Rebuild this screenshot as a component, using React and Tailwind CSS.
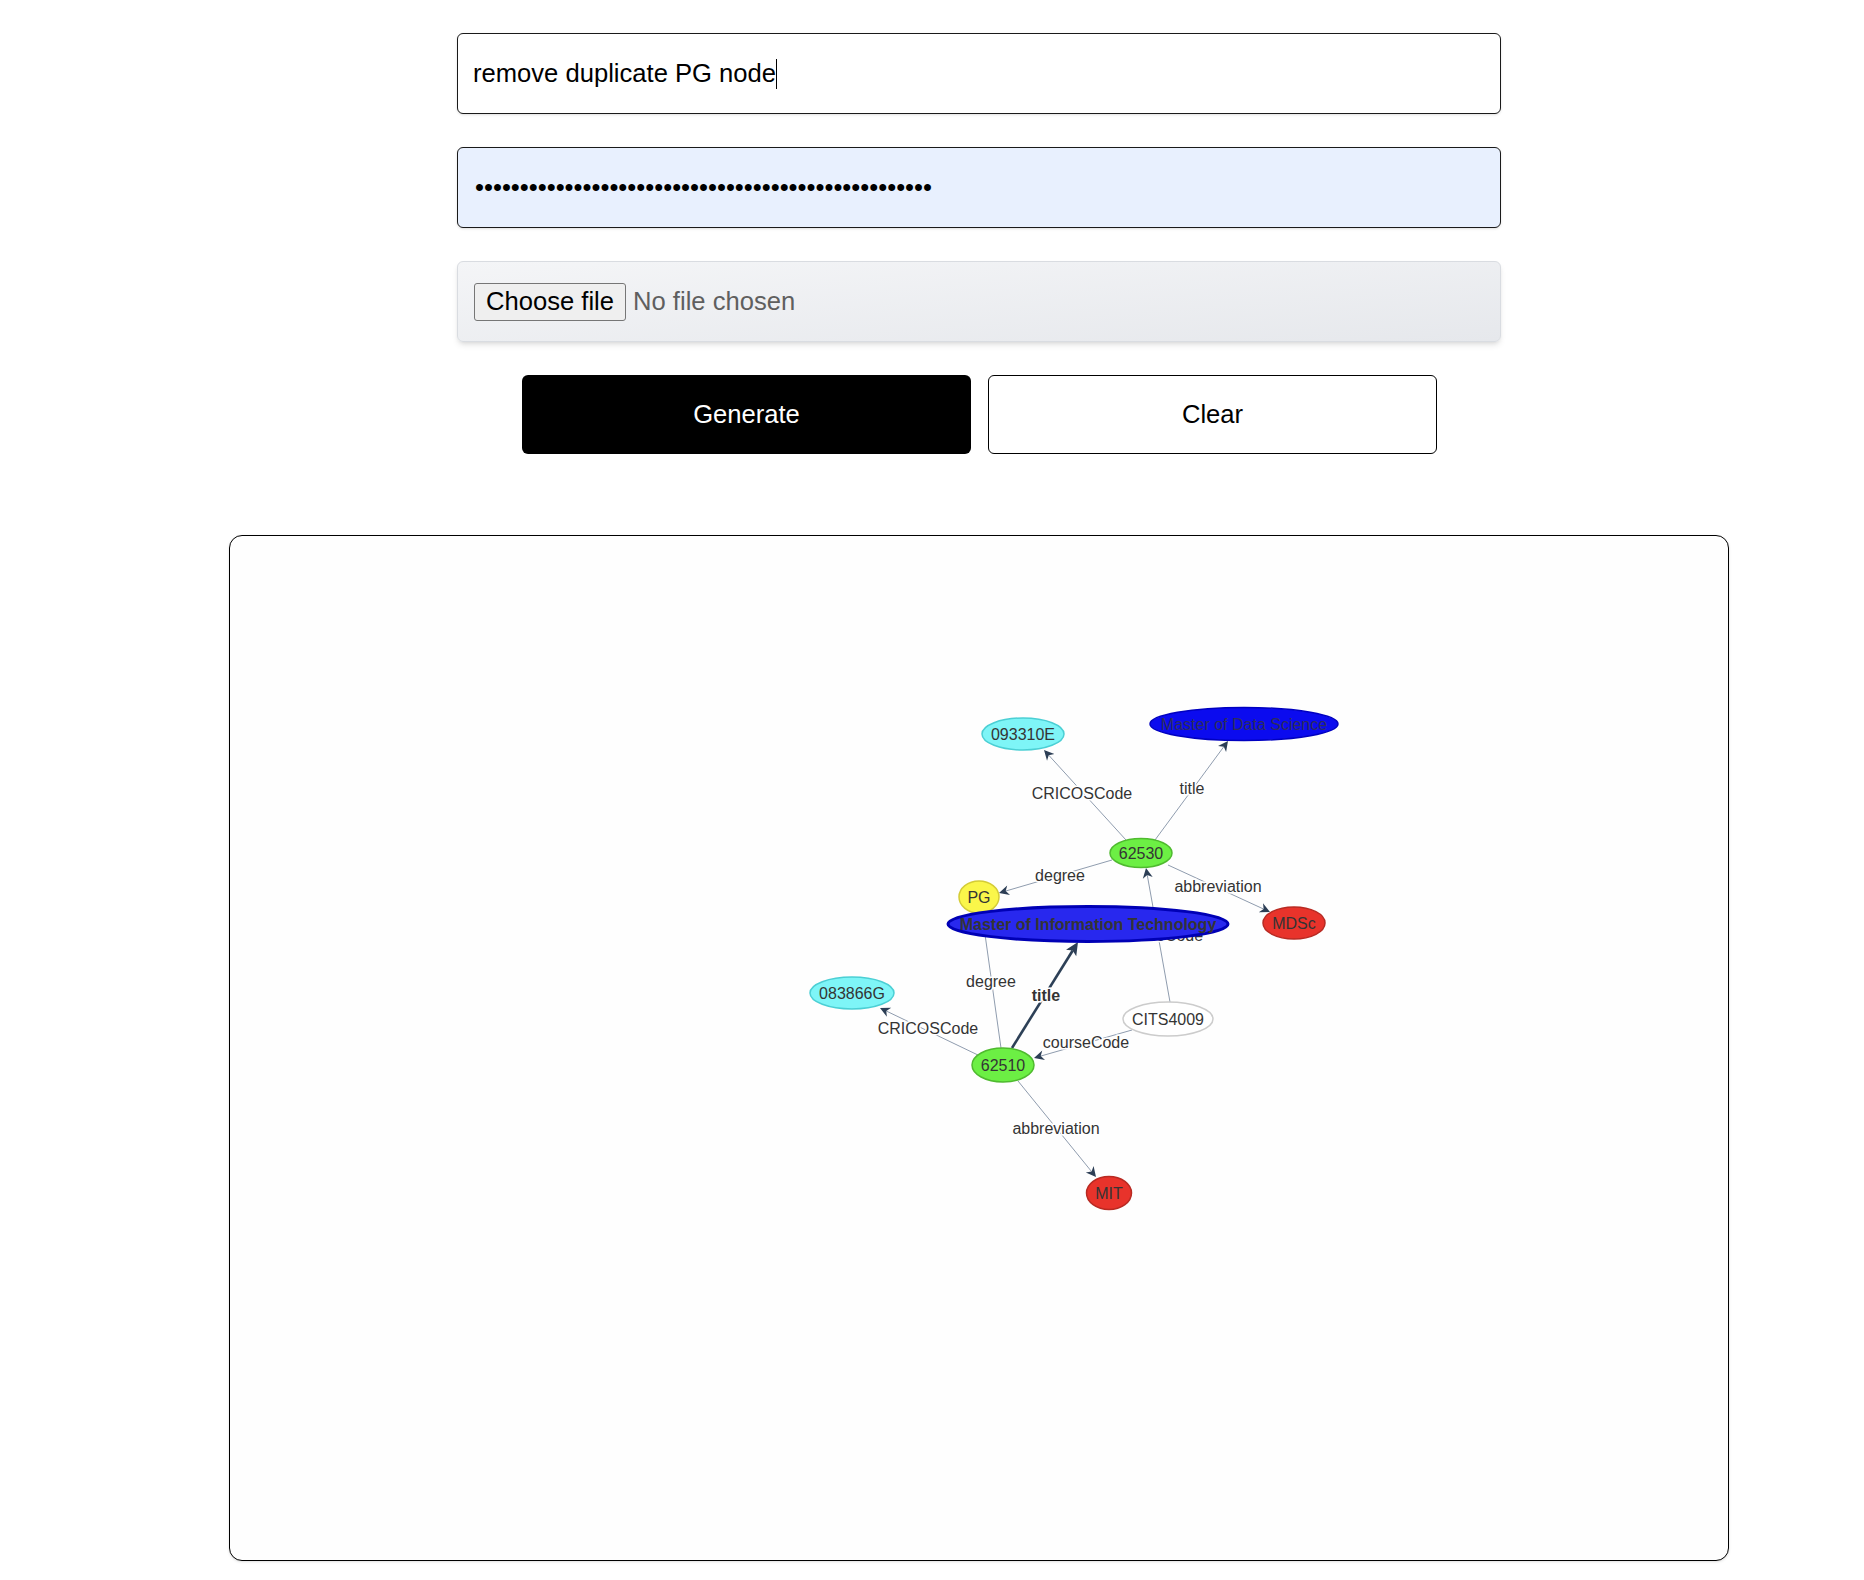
import React from "react";

const nodes = [
  { id: "093310E", x: 1023, y: 734, rx: 41, ry: 16, fill: "#7ef5f7", stroke: "#4bcfd4" },
  { id: "Master of Data Science", x: 1244, y: 724, rx: 94, ry: 16.5, fill: "#0b0bef", stroke: "#0000c0", text: "#2e2e5a" },
  { id: "62530", x: 1141, y: 853, rx: 31, ry: 14.5, fill: "#6cef44", stroke: "#4fba2f" },
  { id: "PG", x: 979, y: 897, rx: 20, ry: 16, fill: "#faf64a", stroke: "#d4cc36" },
  { id: "MDSc", x: 1294, y: 923, rx: 31, ry: 16, fill: "#e8332b", stroke: "#b82a22" },
  { id: "083866G", x: 852, y: 993, rx: 42, ry: 16, fill: "#7ef5f7", stroke: "#4bcfd4" },
  { id: "CITS4009", x: 1168, y: 1019, rx: 45, ry: 17, fill: "#ffffff", stroke: "#cccccc" },
  { id: "62510", x: 1003, y: 1065, rx: 31, ry: 17, fill: "#6cef44", stroke: "#4fba2f" },
  { id: "MIT", x: 1109, y: 1193, rx: 22.5, ry: 16.5, fill: "#e8332b", stroke: "#b82a22" },
];

const bigNode = { id: "Master of Information Technology", x: 1088, y: 924, rx: 140, ry: 17.5, fill: "#2828ee", stroke: "#0000b5" };

const edges = [
  { x1: 1126, y1: 840, x2: 1044, y2: 750, label: "CRICOSCode", lx: 1082, ly: 793 },
  { x1: 1155, y1: 840, x2: 1228, y2: 741, label: "title", lx: 1192, ly: 788 },
  { x1: 1112, y1: 860, x2: 999, y2: 893, label: "degree", lx: 1060, ly: 875 },
  { x1: 1168, y1: 865, x2: 1270, y2: 912, label: "abbreviation", lx: 1218, ly: 886 },
  { x1: 1170, y1: 1002, x2: 1146, y2: 868, label: "courseCode", lx: 1160, ly: 935 },
  { x1: 980, y1: 1056, x2: 880, y2: 1008, label: "CRICOSCode", lx: 928, ly: 1028 },
  { x1: 1001, y1: 1048, x2: 982, y2: 913, label: "degree", lx: 991, ly: 981 },
  { x1: 1132, y1: 1030, x2: 1034, y2: 1058, label: "courseCode", lx: 1086, ly: 1042 },
  { x1: 1018, y1: 1081, x2: 1096, y2: 1177, label: "abbreviation", lx: 1056, ly: 1128 },
  { x1: 1012, y1: 1048, x2: 1078, y2: 942, label: "title", lx: 1046, ly: 995, bold: true },
];

function arrowGeom(e) {
  const len = e.bold ? 13 : 10;
  const w = e.bold ? 6 : 5;
  const dx = e.x2 - e.x1;
  const dy = e.y2 - e.y1;
  const L = Math.hypot(dx, dy);
  const ux = dx / L;
  const uy = dy / L;
  const bx = e.x2 - ux * len;
  const by = e.y2 - uy * len;
  const px = -uy;
  const py = ux;
  const nx = e.x2 - ux * (len - 3);
  const ny = e.y2 - uy * (len - 3);
  return {
    pts: `${e.x2},${e.y2} ${bx + px * w},${by + py * w} ${nx},${ny} ${bx - px * w},${by - py * w}`,
    ex: nx,
    ey: ny,
  };
}

function Graph() {
  return (
    <svg className="absolute inset-0" width="1498" height="1024" viewBox="0 0 1498 1024">
      <g transform="translate(-230,-536)" fontFamily="'Liberation Sans', Arial, sans-serif">
        {edges.map((e, i) => {
          const a = arrowGeom(e);
          return (
            <g key={i}>
              <line
                x1={e.x1}
                y1={e.y1}
                x2={a.ex}
                y2={a.ey}
                stroke={e.bold ? "#2d4057" : "#8f9cae"}
                strokeWidth={e.bold ? 2.6 : 1}
              />
              <polygon points={a.pts} fill="#2c3e55" />
              <text
                x={e.lx}
                y={e.ly}
                textAnchor="middle"
                dominantBaseline="central"
                fontSize="16"
                fontWeight={e.bold ? "bold" : "normal"}
                fill="#343434"
                stroke="#ffffff"
                strokeWidth="3"
                paintOrder="stroke"
              >
                {e.label}
              </text>
            </g>
          );
        })}
        {nodes.map((n) => (
          <g key={n.id}>
            <ellipse cx={n.x} cy={n.y} rx={n.rx} ry={n.ry} fill={n.fill} stroke={n.stroke} strokeWidth="1.5" />
            <text
              x={n.x}
              y={n.y}
              textAnchor="middle"
              dominantBaseline="central"
              fontSize="16"
              fill={n.text || "#343434"}
            >
              {n.id}
            </text>
          </g>
        ))}
        <ellipse
          cx={bigNode.x}
          cy={bigNode.y}
          rx={bigNode.rx}
          ry={bigNode.ry}
          fill={bigNode.fill}
          stroke={bigNode.stroke}
          strokeWidth="3"
        />
        <text
          x={bigNode.x}
          y={bigNode.y}
          textAnchor="middle"
          dominantBaseline="central"
          fontSize="16"
          fontWeight="bold"
          fill="#343434"
        >
          {bigNode.id}
        </text>
      </g>
    </svg>
  );
}

export default function App() {
  const dots = "•".repeat(51);
  return (
    <div className="min-h-[1580px] bg-white text-black font-['Liberation_Sans',Arial,sans-serif] pt-[33px] pb-[19px]">
      <div className="ml-[457px] w-[1044px] flex flex-col gap-[33px]">
        <div className="h-[81px] border border-[#1a1a1a] rounded-[6px] bg-white px-[15px] flex items-center text-[25.6px] shadow-sm">
          <span>remove duplicate PG node</span>
          <span className="inline-block w-px h-[30px] bg-black"></span>
        </div>
        <div className="h-[81px] border border-[#1a1a1a] rounded-[6px] bg-[#e8f0fe] px-[17px] flex items-center text-[25.6px] shadow-sm">
          <span className="leading-none">{dots}</span>
        </div>
        <div className="h-[81px] border border-[#d9dce1] rounded-[6px] bg-gradient-to-br from-[#f4f5f7] to-[#e6e8ec] pl-[16px] flex items-center text-[25.6px] shadow-md">
          <span className="h-[38px] px-[11px] flex items-center border border-[#767676] bg-[#efefef] rounded-[3px] text-black">
            Choose file
          </span>
          <span className="ml-[7px] text-[#5f5f5f]">No file chosen</span>
        </div>
      </div>
      <div className="ml-[522px] mt-[33px] flex gap-[17px]">
        <button className="w-[449px] h-[79px] rounded-[6px] bg-black text-white text-[25.6px]">Generate</button>
        <button className="w-[449px] h-[79px] rounded-[6px] bg-white border border-black text-black text-[25.6px]">
          Clear
        </button>
      </div>
      <div className="ml-[229px] mt-[81px] w-[1500px] h-[1026px] border border-black rounded-[13px] bg-[#fefefe] relative overflow-hidden shadow-sm">
        <Graph />
      </div>
    </div>
  );
}
